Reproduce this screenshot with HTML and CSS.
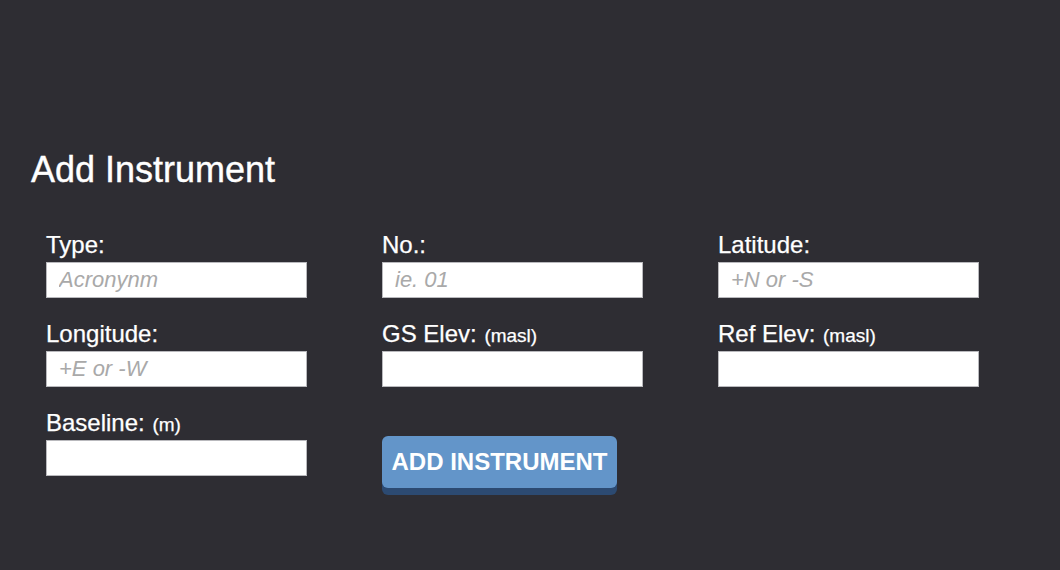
FILE: index.html
```html
<!DOCTYPE html>
<html lang="en">
<head>
<meta charset="utf-8">
<title>Add Instrument</title>
<link rel="stylesheet" href="styles.css">
</head>
<body>
<div class="page">
  <h1 class="title">Add Instrument</h1>
  <form class="form">
    <div class="field">
      <label class="label">Type:</label>
      <input class="input" type="text" placeholder="Acronynm">
    </div>
    <div class="field">
      <label class="label">No.:</label>
      <input class="input" type="text" placeholder="ie. 01">
    </div>
    <div class="field">
      <label class="label">Latitude:</label>
      <input class="input" type="text" placeholder="+N or -S">
    </div>
    <div class="field">
      <label class="label">Longitude:</label>
      <input class="input" type="text" placeholder="+E or -W">
    </div>
    <div class="field">
      <label class="label">GS Elev: <span class="unit">(masl)</span></label>
      <input class="input" type="text">
    </div>
    <div class="field">
      <label class="label">Ref Elev: <span class="unit">(masl)</span></label>
      <input class="input" type="text">
    </div>
    <div class="field">
      <label class="label">Baseline: <span class="unit">(m)</span></label>
      <input class="input" type="text">
    </div>
    <div class="field field-button">
      <button class="button" type="button">ADD INSTRUMENT</button>
    </div>
  </form>
</div>
</body>
</html>
```

FILE: styles.css
```css
html, body {
  margin: 0;
  padding: 0;
  background: #2e2d33;
}

body {
  font-family: "Liberation Sans", Arial, Helvetica, sans-serif;
  color: #ffffff;
  width: 1060px;
  height: 570px;
  overflow: hidden;
}

.page {
  padding: 152px 0 0 31px;
}

.title {
  margin: 0;
  font-size: 36px;
  font-weight: normal;
  line-height: 36px;
  -webkit-text-stroke: 0.4px #ffffff;
}

.form {
  display: grid;
  grid-template-columns: repeat(3, 261px);
  column-gap: 75px;
  row-gap: 24px;
  margin: 45px 0 0 15px;
}

.field {
  display: flex;
  flex-direction: column;
  gap: 5px;
}

.label {
  font-size: 24px;
  line-height: 24px;
  height: 24px;
  white-space: nowrap;
  -webkit-text-stroke: 0.25px #ffffff;
}

.unit {
  font-size: 19px;
  margin-left: 1px;
}

.input {
  box-sizing: border-box;
  width: 261px;
  height: 36px;
  margin: 0;
  border: 1px solid #b9b9bd;
  background: #ffffff;
  padding: 0 12px;
  font-family: "Liberation Sans", Arial, sans-serif;
  font-size: 22px;
  color: #333;
  outline: none;
}

.input::placeholder {
  color: #a9a9a9;
  font-style: italic;
}

.field-button {
  padding-top: 25px;
}

.button {
  box-sizing: border-box;
  width: 235px;
  height: 52px;
  margin: 0;
  border: none;
  border-radius: 6px;
  background: #6395c9;
  box-shadow: 0 7px 0 #2c4a72;
  color: #ffffff;
  font-family: "Liberation Sans", Arial, sans-serif;
  font-weight: bold;
  font-size: 24px;
  padding: 0;
  cursor: pointer;
}
```
